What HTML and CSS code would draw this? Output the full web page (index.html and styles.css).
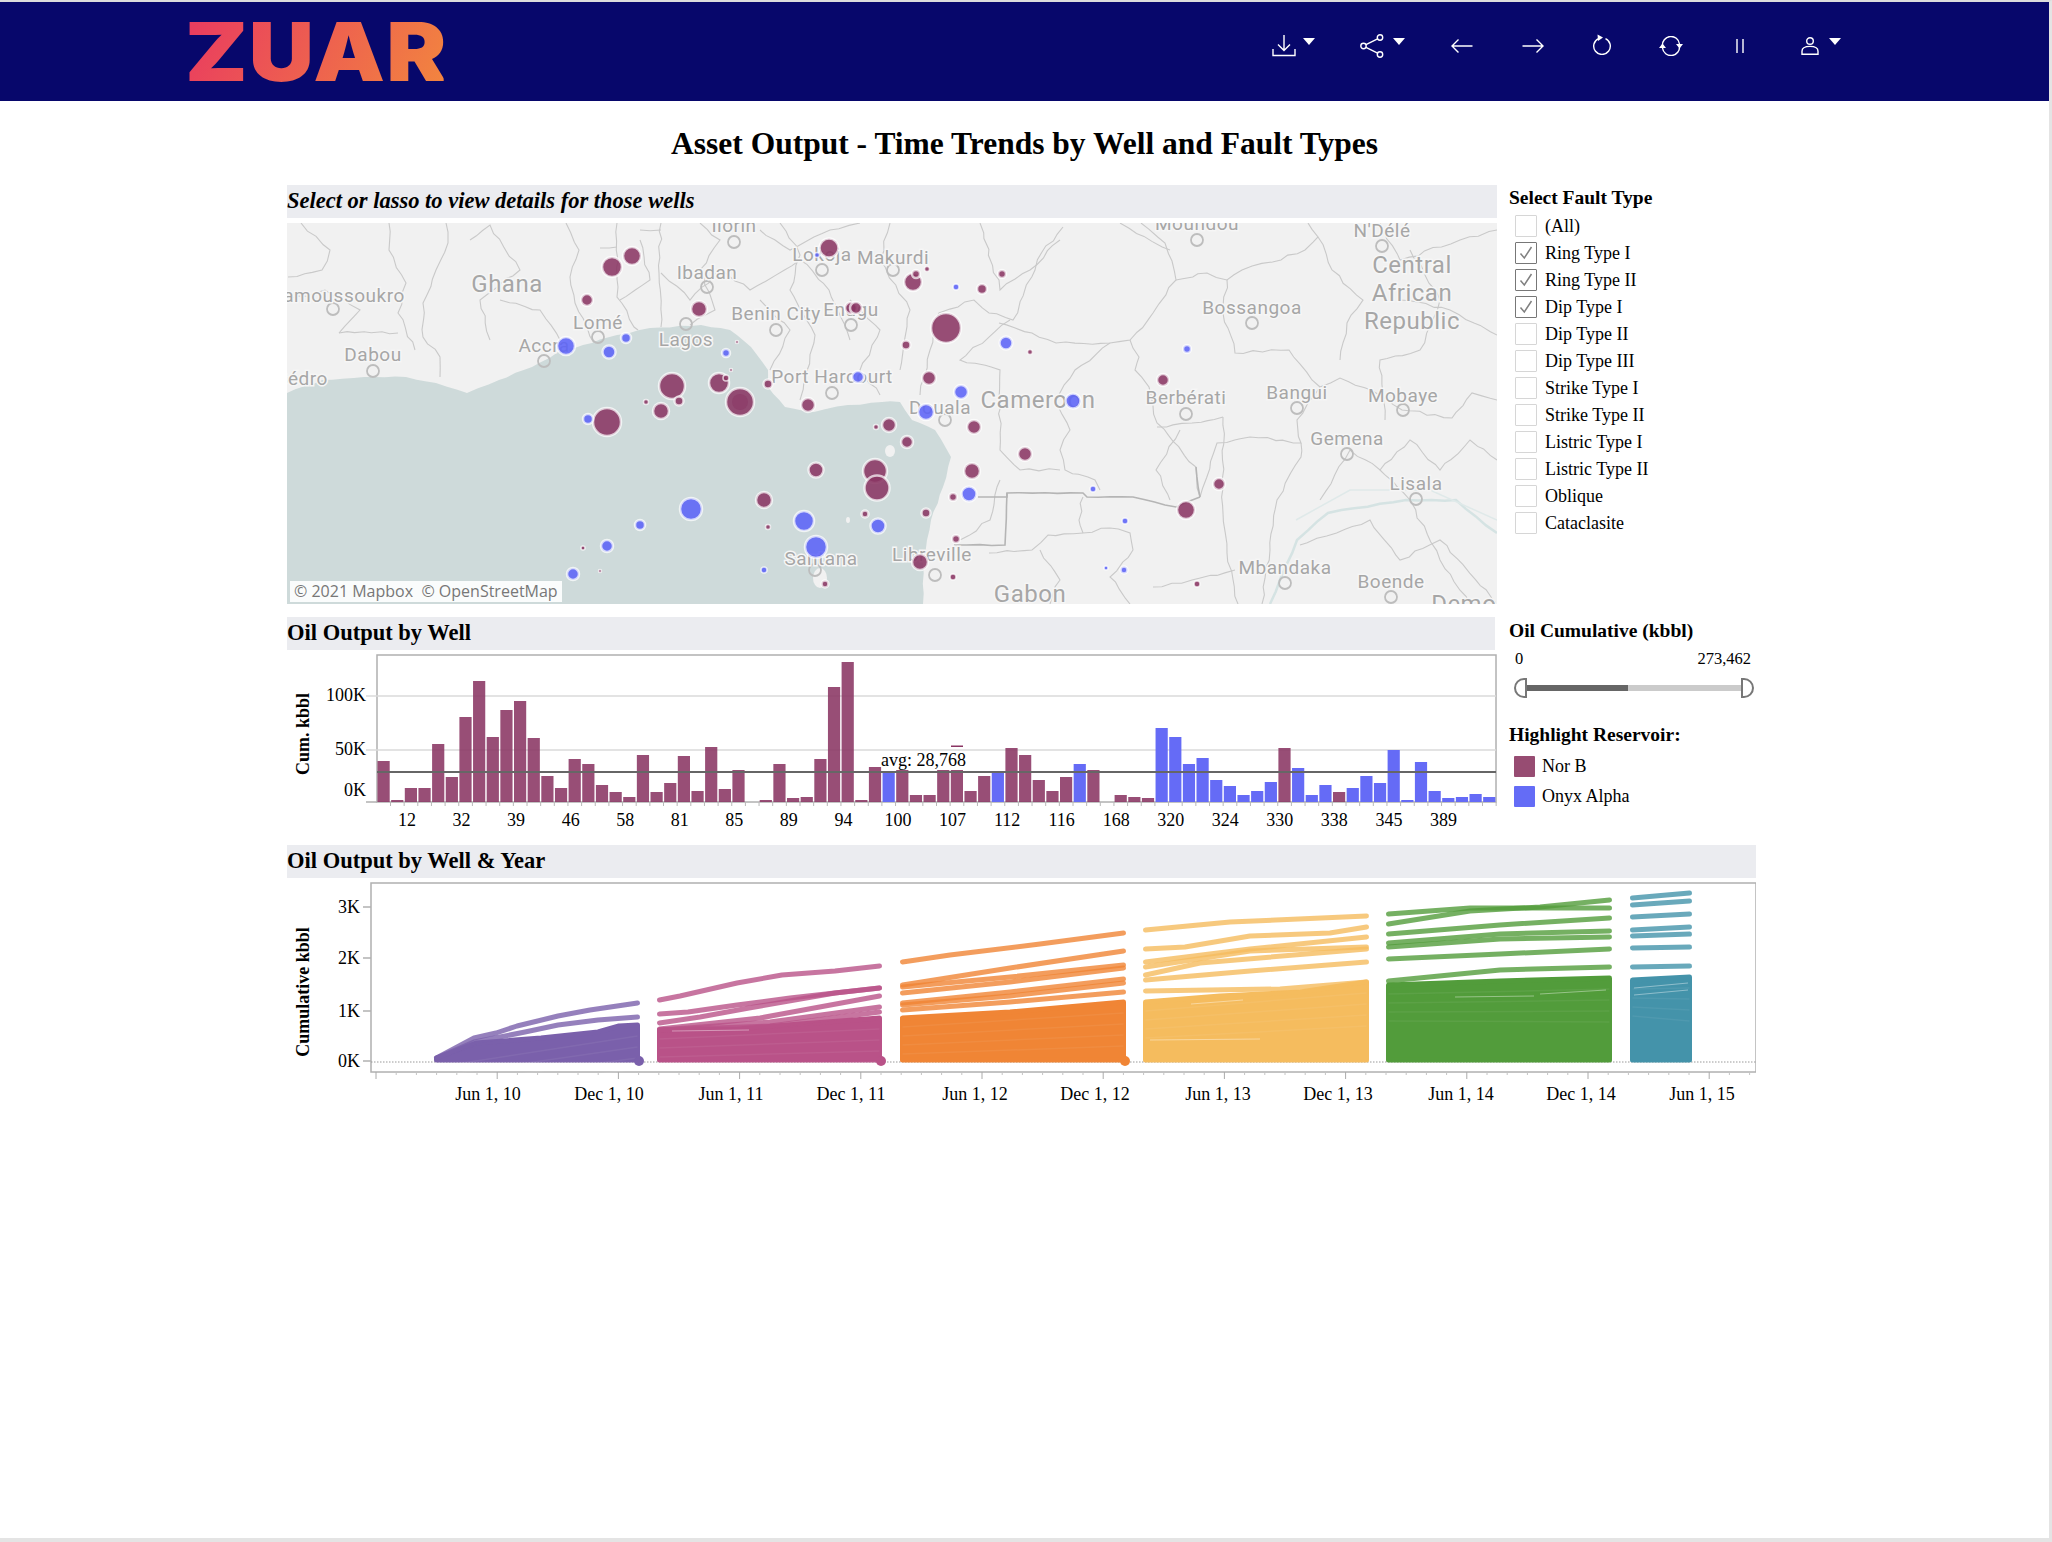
FILE: index.html
```html
<!DOCTYPE html>
<html lang="en">
<head>
    <meta charset="UTF-8">
    <meta name="viewport" content="width=device-width, initial-scale=1.0">
    <title>Asset Output - Time Trends by Well and Fault Types</title>
    <link rel="stylesheet" href="styles.css">
</head>
<body>

    <header class="topbar">
        <div class="logo">ZUAR</div>
        <nav class="tools">
            <span class="tool tool-download">
                <svg width="24" height="22" viewBox="0 0 24 22"><path d="M12 0V15M6 9.5L12 15.5L18 9.5M1 14V20.5H23V14"/></svg>
                <i class="caret"></i>
            </span>
            <span class="tool tool-share">
                <svg width="26" height="24" viewBox="0 0 26 24"><circle cx="3.5" cy="12" r="2.7"/><circle cx="20" cy="3.5" r="2.7"/><circle cx="20" cy="20.5" r="2.7"/><path d="M6 10.7L17.6 4.8M6 13.3L17.6 19.2"/></svg>
                <i class="caret"></i>
            </span>
            <span class="tool tool-back">
                <svg width="22" height="14" viewBox="0 0 22 14"><path d="M21.5 7H1M7.5 .5L1 7L7.5 13.5"/></svg>
            </span>
            <span class="tool tool-forward">
                <svg width="22" height="14" viewBox="0 0 22 14"><path d="M.5 7H21M14.5 .5L21 7L14.5 13.5"/></svg>
            </span>
            <span class="tool tool-undo">
                <svg width="20" height="21" viewBox="0 0 20 21"><path d="M13.5 4.6A8.3 8.3 0 1 1 6.5 4.6"/><path class="solid" d="M5.5 .5L11 3.4L6 7Z"/></svg>
            </span>
            <span class="tool tool-refresh">
                <svg width="24" height="20" viewBox="0 0 24 20"><path d="M3.5 10A8.5 8.5 0 0 1 20.5 8M20.5 10A8.5 8.5 0 0 1 3.5 12"/><path class="solid" d="M17 8H24L20.5 12.5ZM0 12H7L3.5 7.5Z"/></svg>
            </span>
            <span class="tool tool-pause">
                <svg width="10" height="14" viewBox="0 0 10 14"><path d="M2 0V14M8 0V14"/></svg>
            </span>
            <span class="tool tool-user">
                <svg width="18" height="18" viewBox="0 0 18 18"><circle cx="9" cy="4" r="3.3"/><path d="M1 17.2V14.2C1 11 4.5 9.4 9 9.4S17 11 17 14.2V17.2Z"/></svg>
                <i class="caret"></i>
            </span>
        </nav>
    </header>

    <h1 class="page-title">Asset Output - Time Trends by Well and Fault Types</h1>

    <main class="dashboard">

        <section class="panel panel-map">
            <h2 class="band band-italic">Select or lasso to view details for those wells</h2>
            <div class="map">
                <svg id="mapSvg" class="map-svg" width="1210" height="381" viewBox="287 223 1210 381"></svg>
                <div class="attribution">&copy; 2021 Mapbox &nbsp;&copy; OpenStreetMap</div>
            </div>
        </section>

        <aside class="side side-filter">
            <h3 class="side-title">Select Fault Type</h3>
            <ul class="checks">
                <li><span class="box"></span>(All)</li>
                <li><span class="box on"><svg width="16" height="16" viewBox="0 0 16 16"><path d="M2.5 8.5L6.3 13L13.5 2"/></svg></span>Ring Type I</li>
                <li><span class="box on"><svg width="16" height="16" viewBox="0 0 16 16"><path d="M2.5 8.5L6.3 13L13.5 2"/></svg></span>Ring Type II</li>
                <li><span class="box on"><svg width="16" height="16" viewBox="0 0 16 16"><path d="M2.5 8.5L6.3 13L13.5 2"/></svg></span>Dip Type I</li>
                <li><span class="box"></span>Dip Type II</li>
                <li><span class="box"></span>Dip Type III</li>
                <li><span class="box"></span>Strike Type I</li>
                <li><span class="box"></span>Strike Type II</li>
                <li><span class="box"></span>Listric Type I</li>
                <li><span class="box"></span>Listric Type II</li>
                <li><span class="box"></span>Oblique</li>
                <li><span class="box"></span>Cataclasite</li>
            </ul>
        </aside>

        <section class="panel panel-bars">
            <h2 class="band">Oil Output by Well</h2>
            <svg id="barSvg" class="chart" width="1210" height="187" viewBox="287 650 1210 187"></svg>
        </section>

        <aside class="side side-slider">
            <h3 class="side-title">Oil Cumulative (kbbl)</h3>
            <div class="range-values"><span>0</span><span>273,462</span></div>
            <div class="range">
                <span class="handle handle-left"></span>
                <span class="track"><span class="track-fill"></span></span>
                <span class="handle handle-right"></span>
            </div>
            <h3 class="side-title legend-title">Highlight Reservoir:</h3>
            <ul class="legend">
                <li><span class="swatch swatch-nor"></span>Nor B</li>
                <li><span class="swatch swatch-onyx"></span>Onyx Alpha</li>
            </ul>
        </aside>

        <section class="panel panel-lines">
            <h2 class="band">Oil Output by Well &amp; Year</h2>
            <svg id="lineSvg" class="chart" width="1469" height="240" viewBox="287 878 1469 240"></svg>
        </section>

    </main>

    <script src="charts.js"></script>
</body>
</html>
```

FILE: styles.css
```css
body {
    margin: 0;
    height: 1542px;
    box-sizing: border-box;
    overflow: hidden;
    background-color: white;
    color: black;
    font-family: "Liberation Serif", serif;
    border-top: 2px solid #dcdcdc;
    border-right: 3px solid #e4e4e4;
    border-bottom: 4px solid #e4e4e4;
}

/* top bar */
.topbar {
    display: flex;
    align-items: center;
    height: 99px;
    padding-left: 185px;
    background-color: #07076b;
}

.logo {
    width: 232px;
    font-family: Inter, "Liberation Sans", sans-serif;
    font-size: 81px;
    font-weight: 900;
    line-height: 72px;
    letter-spacing: 1px;
    background: linear-gradient(115deg, #e93a60, #f2853f);
    -webkit-background-clip: text;
    background-clip: text;
    color: transparent;
    transform: scaleX(1.115);
    transform-origin: left center;
}

.tools {
    display: flex;
    align-items: flex-start;
    align-self: flex-start;
    margin-left: 855px;
    margin-top: 33px;
}

.tool {
    display: flex;
    align-items: flex-start;
}

.tool svg {
    fill: none;
    stroke: white;
    stroke-width: 1.4;
}

.tool .solid {
    fill: white;
    stroke: none;
}

.caret {
    width: 0;
    height: 0;
    margin-left: 7px;
    margin-top: 3px;
    border-left: 6.5px solid transparent;
    border-right: 6.5px solid transparent;
    border-top: 7px solid white;
}

.tool-share { margin-left: 45px; margin-top: -1px; }
.tool-share .caret { margin-top: 4px; }
.tool-back { margin-left: 46px; margin-top: 4px; }
.tool-forward { margin-left: 49px; margin-top: 4px; }
.tool-undo { margin-left: 48px; margin-top: -1px; }
.tool-refresh { margin-left: 47px; margin-top: 1px; }
.tool-pause { margin-left: 52px; margin-top: 4px; }
.tool-user { margin-left: 56px; margin-top: 2px; }
.tool-user .caret { margin-left: 10px; margin-top: 1px; }

/* title */
.page-title {
    margin: 25px 0 0 0;
    font-size: 31.5px;
    line-height: 36px;
    font-weight: bold;
    text-align: center;
}

/* dashboard grid */
.dashboard {
    display: grid;
    grid-template-columns: 1210px 260px;
    grid-template-rows: 432px 228px auto;
    column-gap: 12px;
    margin: 23px 0 0 287px;
}

.band {
    margin: 0;
    height: 33px;
    padding: 0;
    background-color: #ebecf0;
    font-size: 22.5px;
    line-height: 32px;
    font-weight: bold;
}

.band-italic {
    font-style: italic;
}

.panel-lines {
    grid-column: 1 / span 2;
    width: 1469px;
}

.panel-bars .band {
    width: 1208px;
}

.map {
    position: relative;
    margin-top: 5px;
    height: 381px;
    overflow: hidden;
}

.map-svg, .chart {
    display: block;
}

.map-svg text {
    fill: #a6a6a6;
    stroke: #f6f6f6;
    stroke-width: 3px;
    paint-order: stroke;
    font-family: Roboto, sans-serif;
    letter-spacing: 0.5px;
    text-anchor: middle;
    dominant-baseline: middle;
}

.attribution {
    position: absolute;
    left: 3px;
    bottom: 2px;
    height: 21px;
    padding: 0 4px;
    background-color: rgba(255, 255, 255, 0.9);
    font-family: "Open Sans", sans-serif;
    font-size: 16px;
    line-height: 21px;
    color: #777;
    white-space: nowrap;
}

.chart text {
    font-family: "Liberation Serif", serif;
    font-size: 18px;
    fill: black;
}

.chart .axis-title {
    font-weight: bold;
    font-size: 18px;
}

/* right column */
.side-title {
    margin: 0;
    font-size: 19.5px;
    line-height: 24px;
    font-weight: bold;
}

.side-filter {
    margin-top: 1px;
}

.checks {
    list-style: none;
    margin: 3px 0 0 6px;
    padding: 0;
}

.checks li {
    display: flex;
    align-items: center;
    gap: 8px;
    height: 27px;
    font-size: 18px;
}

.box {
    display: flex;
    align-items: center;
    justify-content: center;
    width: 20px;
    height: 20px;
    margin-top: -2px;
    border: 1px solid #d6d6d6;
    border-radius: 1px;
}

.box.on {
    border-color: #777;
}

.box svg {
    fill: none;
    stroke: #808080;
    stroke-width: 1.5;
}

.side-slider {
    padding-top: 2px;
}

.range-values {
    display: flex;
    justify-content: space-between;
    width: 236px;
    margin: 6px 0 0 6px;
    font-size: 16.5px;
    line-height: 20px;
}

.range {
    display: flex;
    align-items: center;
    width: 240px;
    margin: 9px 0 0 5px;
}

.handle {
    width: 13px;
    height: 20px;
    box-sizing: border-box;
    border: 2px solid #777;
    background-color: white;
}

.handle-left {
    border-radius: 10px 0 0 10px;
}

.handle-right {
    border-radius: 0 10px 10px 0;
}

.track {
    flex: 1;
    height: 6px;
    background-color: #cbcbcb;
}

.track-fill {
    display: block;
    width: 101px;
    height: 6px;
    background-color: #666;
}

.legend-title {
    margin-top: 25px;
}

.legend {
    list-style: none;
    margin: 4px 0 0 5px;
    padding: 0;
}

.legend li {
    display: flex;
    align-items: center;
    gap: 7px;
    height: 30px;
    font-size: 18px;
}

.swatch {
    width: 21px;
    height: 21px;
    border-radius: 1px;
}

.swatch-nor {
    background-color: #974c72;
}

.swatch-onyx {
    background-color: #646cf6;
}
```

FILE: charts.js
```js
// draws the map, bar chart and line chart into the three svgs
const MAROON = '#8a3563';
const BLUE = '#5c63f7';
const BAR_BLUE = '#656bf6';

function pts(list) {
    return list.map(p => p.join(',')).join(' ');
}

function line(list, attrs) {
    return `<polyline points="${pts(list)}" fill="none" ${attrs}/>`;
}

// small fixed noise so the borders don't look ruler straight
let seed = 7;
function noise() {
    seed = (seed * 16807) % 2147483647;
    return (seed % 1000) / 500 - 1;
}

function wiggle(list, step, amount) {
    const out = [list[0]];
    for (let i = 1; i < list.length; i++) {
        const a = list[i - 1];
        const b = list[i];
        const n = Math.max(1, Math.round(Math.hypot(b[0] - a[0], b[1] - a[1]) / step));
        for (let k = 1; k <= n; k++) {
            const t = k / n;
            const off = k === n ? 0 : amount;
            out.push([
                +(a[0] + (b[0] - a[0]) * t + noise() * off).toFixed(1),
                +(a[1] + (b[1] - a[1]) * t + noise() * off).toFixed(1)
            ]);
        }
    }
    return out;
}

/* ---------- map ---------- */
const sea = [[287,393],[322,380],[364,377],[406,377],[436,383],[467,393],[499,380],[532,367],[558,352],[583,345],[617,335],[650,328],[701,325],[730,330],[751,347],[768,370],[768,387],[785,407],[814,412],[848,405],[882,402],[900,402],[912,420],[935,430],[951,457],[943,487],[931,520],[927,540],[923,563],[923,604],[287,604]];

const borders = [
    [[446,223],[448,243],[436,270],[423,303],[423,337],[440,357],[440,377]],
    [[566,223],[579,250],[570,277],[575,303],[587,327],[594,343]],
    [[617,223],[617,297],[634,327],[638,330]],
    [[661,223],[659,273],[661,327]],
    [[617,247],[600,248]], [[640,230],[661,230]],
    [[301,223],[330,250],[322,270],[288,277]],
    [[389,223],[389,250],[406,283],[398,313],[415,350]],
    [[339,333],[398,333]],
    [[288,300],[325,290],[360,310],[339,333]],
    [[470,240],[490,225],[520,270],[480,300],[490,340]],
    [[500,300],[540,310],[560,340]],
    [[661,273],[690,300],[720,270],[750,290],[800,260],[829,290],[850,340]],
    [[700,223],[720,240],[700,270]],
    [[760,230],[790,250],[830,230],[860,223]],
    [[760,300],[790,330],[770,370]],
    [[850,300],[880,330],[860,370],[880,395]],
    [[780,223],[800,255],[790,290],[815,335],[800,400]],
    [[700,270],[715,310],[690,325]],
    [[620,300],[650,280],[640,240]],
    [[890,223],[880,260],[910,310],[900,370]],
    [[1063,227],[1042,252],[1013,320],[989,313],[974,300],[958,307],[939,313],[930,350],[920,395]],
    [[999,323],[1032,333],[1056,343],[1110,343],[1130,340],[1153,313],[1176,280],[1165,243],[1141,223]],
    [[1130,340],[1139,357],[1135,370],[1149,387],[1157,423],[1196,467],[1200,497]],
    [[1176,280],[1207,273],[1227,280],[1242,270],[1281,260],[1305,250],[1318,237],[1308,223]],
    [[1318,237],[1332,270],[1363,300],[1347,323],[1340,360]],
    [[1227,280],[1223,313],[1235,353],[1289,350],[1312,380],[1320,387]],
    [[1157,427],[1192,423],[1223,417]],
    [[1200,497],[1217,443],[1250,437],[1301,443],[1297,420],[1320,387],[1340,378],[1371,390],[1402,410],[1452,418],[1472,393],[1497,400]],
    [[1301,443],[1301,457],[1277,500],[1270,550],[1262,604]],
    [[1223,417],[1223,513],[1227,553],[1238,604]],
    [[1235,570],[1192,580],[1153,587]],
    [[1110,343],[1075,370],[1056,400],[1070,430],[1060,450],[1065,470],[1095,480],[1100,490]],
    [[1083,497],[1079,520],[1083,533]],
    [[1083,533],[1110,528],[1130,533],[1133,550],[1110,577],[1130,604]],
    [[1083,533],[1048,535],[1032,550],[989,553]],
    [[980,223],[1000,290],[1030,270],[1060,240]],
    [[1010,320],[960,360],[1000,370],[1000,450],[1020,470],[1060,470]],
    [[1180,430],[1156,470],[1170,500]],
    [[1380,223],[1400,260],[1460,240],[1497,230]],
    [[1410,250],[1440,300],[1420,350],[1380,360],[1385,420]],
    [[1400,300],[1450,310],[1497,335]],
    [[1320,500],[1350,450],[1380,470],[1410,440],[1440,470],[1470,440],[1497,460]],
    [[1380,470],[1410,500],[1440,560],[1470,604]],
    [[1300,545],[1370,520],[1400,560],[1440,540],[1497,604]],
    [[960,540],[990,520],[1000,480]],
    [[1120,223],[1170,250]],
    [[1040,550],[1060,580],[1050,604]]
];
const heavy = [
    [[978,497],[1007,497],[1007,493],[1083,493],[1087,497],[1133,497],[1165,505],[1176,507],[1200,497]],
    [[1007,493],[1005,545],[954,545]],
    [[1196,467],[1200,497]]
];
const river = [[1270,604],[1297,540],[1328,513],[1406,500],[1456,500],[1497,533]];

const cities = [[734,242],[1197,240],[1382,246],[707,287],[893,270],[822,270],[776,330],[851,325],[1252,323],[598,337],[686,324],[544,361],[373,371],[333,309],[832,393],[945,420],[1186,414],[1297,408],[1403,410],[1347,454],[1416,499],[1285,583],[1391,597],[815,570],[935,575]];

const labels = [
    ['Ilorin',734,227,19],['Moundou',1197,225,19],["N'Délé",1382,232,19],
    ['Central',1412,267,24],['African',1412,295,24],['Republic',1412,323,24],
    ['Ghana',507,286,24],['amoussoukro',344,297,19],['Ibadan',707,274,19],
    ['Makurdi',893,259,19],['Lokoja',822,256,19],['Benin City',776,315,19],
    ['Enugu',851,311,19],['Bossangoa',1252,309,19],['Lomé',598,324,19],
    ['Lagos',686,341,19],['Accra',544,347,19],['Dabou',373,356,19],
    ['Sédro',302,380,19],['Port Harcourt',832,378,19],['Douala',940,409,19],
    ['Cameroon',1038,402,24],['Berbérati',1186,399,19],['Bangui',1297,394,19],
    ['Mobaye',1403,397,19],['Gemena',1347,440,19],['Lisala',1416,485,19],
    ['Santana',821,560,19],['Libreville',932,556,19],['Mbandaka',1285,569,19],
    ['Boende',1391,583,19],['Gabon',1030,596,24],['Democratic',1495,606,24]
];

const maroonDots = [[632,256,9],[612,267,10],[587,300,6],[699,309,8],[829,248,9.5],[913,282,9],[916,274,4],[927,269,2.5],[851,308,6],[856,308,6],[906,345,4.5],[929,378,7],[768,384,4.5],[808,405,7],[889,425,7],[876,427,2.5],[907,442,6],[672,386,13],[679,401,4.5],[661,411,8],[646,402,2.5],[719,383,10],[726,378,3],[731,370,1.5],[737,342,1.5],[740,402,14],[607,422,14],[816,470,7.5],[875,471,12],[877,488,12.5],[764,500,8],[865,514,3.5],[926,513,4.5],[768,527,2.5],[583,548,2],[600,571,1.5],[825,584,3.5],[920,562,8],[946,328,15],[982,289,5],[1002,274,4],[1030,352,2.5],[974,427,7],[1025,454,7],[972,471,8],[953,497,4],[956,539,4],[953,577,3],[1163,380,6],[1186,510,9],[1219,484,6],[1197,584,3]];
const blueDots = [[566,346,9],[609,352,6.5],[626,338,5],[726,353,4],[588,419,5],[858,377,6],[926,412,8],[817,255,2.5],[691,509,11],[640,525,5],[804,521,10],[878,526,7.5],[816,547,11],[607,546,6],[573,574,6],[764,570,3],[1006,343,6.5],[956,287,3],[961,392,7],[1073,401,7.5],[969,494,7.5],[1187,349,4],[1093,489,3],[1125,521,3],[1124,570,3.5],[1106,568,2]];

function dot(d, color) {
    return `<circle cx="${d[0]}" cy="${d[1]}" r="${d[2]}" fill="${color}" fill-opacity="0.88" stroke="#fff" stroke-opacity="0.7" stroke-width="${d[2] > 3 ? 2.5 : 1.5}"/>`;
}

let map = '<rect x="287" y="223" width="1210" height="381" fill="#f1f1f1"/>';
map += line(wiggle(river, 14, 1), 'stroke="#d5e3e3" stroke-width="2.5"');
map += line([[1296,520],[1350,490],[1430,490],[1497,520]], 'stroke="#dfe9e9" stroke-width="1.5"');
borders.forEach(b => { map += line(wiggle(b, 9, 1.6), 'stroke="#c9c9c9" stroke-width="1.1"'); });
heavy.forEach(b => { map += line(wiggle(b, 12, 0.5), 'stroke="#b5b5b5" stroke-width="1.6"'); });
map += `<polygon points="${pts(wiggle(sea.slice(0, 30), 10, 0.8).concat([[923,604],[287,604]]))}" fill="#cedada"/>`;
map += '<ellipse cx="890" cy="451" rx="5" ry="6" fill="#f1f1f1"/><ellipse cx="848" cy="520" rx="2" ry="3" fill="#f1f1f1"/><ellipse cx="820" cy="578" rx="7" ry="10" fill="#f1f1f1"/>';
cities.forEach(c => { map += `<circle cx="${c[0]}" cy="${c[1]}" r="6" fill="none" stroke="#bdbdbd" stroke-width="1.8"/>`; });
labels.forEach(l => { map += `<text x="${l[1]}" y="${l[2]}" font-size="${l[3]}">${l[0]}</text>`; });
maroonDots.forEach(d => { map += dot(d, MAROON); });
map += `<circle cx="740" cy="402" r="8" fill="${MAROON}" fill-opacity="0.5"/>`;
blueDots.forEach(d => { map += dot(d, BLUE); });
document.getElementById('mapSvg').innerHTML = map;

/* ---------- bars ---------- */
const barHeights = [41,2,14,14,58,25,85,121,65,92,101,64,26,14,43,38,17,10,5,47,10,19,46,11,55,13,32,0,2,38,4,5,43,115,140,2,35,30,32,7,7,32,32,11,26,30,54,47,22,11,25,38,32,0,7,5,4,74,65,38,44,22,16,7,11,20,54,34,7,17,10,14,26,19,52,2,40,11,4,5,8,5];
const blueBars = [37,45,51,57,58,59,60,61,62,63,64,65,67,68,69,71,72,73,74,75,76,77,78,79,80,81];
const wellTicks = ['12','32','39','46','58','81','85','89','94','100','107','112','116','168','320','324','330','338','345','389'];

let bars = '';
bars += '<rect x="377" y="655" width="1119" height="147" fill="none" stroke="#b0b0b0" stroke-width="1.5"/>';
[696, 750].forEach(y => { bars += `<line x1="366" x2="1496" y1="${y}" y2="${y}" stroke="#dadada" stroke-width="1.5"/>`; });
bars += '<line x1="366" x2="377" y1="802" y2="802" stroke="#b0b0b0" stroke-width="1.5"/>';
barHeights.forEach((h, i) => {
    const x = 377.5 + i * 13.65;
    const isBlue = blueBars.includes(i);
    bars += `<line x1="${x + 13}" x2="${x + 13}" y1="802" y2="806" stroke="#b8b8b8"/>`;
    if (h) bars += `<rect x="${x}" y="${802 - h}" width="12.2" height="${h}" fill="${isBlue ? BAR_BLUE : MAROON}" fill-opacity="${isBlue ? 1 : 0.88}"/>`;
});
bars += '<rect x="882" y="751" width="84" height="19" fill="#fff" fill-opacity="0.9"/>';
bars += `<rect x="951" y="745.5" width="12" height="1.5" fill="${MAROON}"/>`;
bars += '<line x1="377" x2="1496" y1="772" y2="772" stroke="#666" stroke-width="2"/>';
bars += '<text x="881" y="766">avg: 28,768</text>';
[['100K',695],['50K',749],['0K',790]].forEach(t => {
    bars += `<text x="366" y="${t[1] + 6}" text-anchor="end">${t[0]}</text>`;
});
wellTicks.forEach((t, i) => {
    bars += `<text x="${407 + i * 54.55}" y="826" text-anchor="middle">${t}</text>`;
});
bars += '<text class="axis-title" transform="translate(309 734) rotate(-90)" text-anchor="middle">Cum. kbbl</text>';
document.getElementById('barSvg').innerHTML = bars;

/* ---------- lines ---------- */
const years = [
    { color: '#7a60ab', x1: 434, x2: 640,
      fill: [[435,1058],[476,1043],[541,1038],[598,1032],[619,1026],[640,1025]],
      lines: [
        [[435,1058],[474,1038],[496,1033],[517,1026],[558,1016],[590,1010],[639,1003]],
        [[435,1058],[474,1042],[525,1032],[558,1025],[598,1020],[639,1017]]
      ], dot: true },
    { color: '#b95288', x1: 657, x2: 882,
      fill: [[657,1030],[737,1029],[800,1024],[882,1018]],
      lines: [
        [[657,1000],[680,996],[737,983],[782,975],[835,971],[882,966]],
        [[657,1014],[688,1012],[737,1005],[790,998],[882,988]],
        [[657,1023],[700,1017],[749,1008],[835,993],[882,988]],
        [[657,1029],[760,1018],[882,996]],
        [[657,1030],[770,1022],[882,1007]],
        [[657,1030],[770,1026],[882,1012]]
      ],
      slivers: [[[672,1031],[749,1030]]], dot: true },
    { color: '#f08535', x1: 900, x2: 1126,
      fill: [[900,1018],[1010,1012],[1126,1002]],
      lines: [
        [[900,962],[950,955],[1040,944],[1126,933]],
        [[900,985],[1010,968],[1126,951]],
        [[900,987],[1010,977],[1126,965]],
        [[900,993],[1010,982],[1126,968]],
        [[900,1003],[1010,992],[1126,979]],
        [[900,1005],[1010,996],[1126,983]],
        [[900,1010],[1010,1002],[1126,992]]
      ], dot: true },
    { color: '#f5bc5e', x1: 1143, x2: 1369,
      fill: [[1143,1002],[1220,996],[1300,992],[1369,982]],
      lines: [
        [[1143,930],[1230,922],[1369,916]],
        [[1143,949],[1185,947],[1250,936],[1330,933],[1369,927]],
        [[1143,962],[1250,949],[1369,937]],
        [[1143,967],[1250,951],[1369,947]],
        [[1143,975],[1200,963],[1369,949]],
        [[1143,980],[1250,971],[1369,962]],
        [[1143,991],[1280,989],[1369,982]]
      ],
      slivers: [[[1191,1004],[1243,1000]], [[1150,1040],[1260,1039]]] },
    { color: '#529c3b', x1: 1386, x2: 1612,
      fill: [[1386,985],[1500,981],[1612,978]],
      lines: [
        [[1386,914],[1470,908],[1540,908],[1612,908]],
        [[1386,924],[1470,911],[1540,907],[1612,900]],
        [[1386,934],[1500,925],[1612,918]],
        [[1386,943],[1500,934],[1612,931]],
        [[1386,947],[1500,939],[1612,937]],
        [[1386,959],[1500,954],[1612,949]],
        [[1386,981],[1500,970],[1612,967]],
        [[1386,998],[1540,995],[1612,993]]
      ],
      slivers: [[[1455,997],[1534,996]], [[1540,994],[1606,990]]] },
    { color: '#4493aa', x1: 1630, x2: 1692,
      fill: [[1630,980],[1692,977]],
      lines: [
        [[1630,898],[1692,893]],
        [[1630,905],[1692,901]],
        [[1630,917],[1692,914]],
        [[1630,930],[1692,927]],
        [[1630,936],[1692,934]],
        [[1630,948],[1692,947]],
        [[1630,967],[1692,966]]
      ],
      slivers: [[[1634,988],[1688,983]], [[1634,995],[1688,990]]] }
];

let chart = '';
chart += '<rect x="371" y="883" width="1385" height="189" fill="none" stroke="#b0b0b0" stroke-width="1.5"/>';
chart += '<line x1="371" x2="1756" y1="1062" y2="1062" stroke="#999" stroke-dasharray="1.5 1.5"/>';
[[907,'3K'],[958,'2K'],[1011,'1K'],[1061,'0K']].forEach(t => {
    chart += `<line x1="363" x2="371" y1="${t[0]}" y2="${t[0]}" stroke="#b0b0b0" stroke-width="1.5"/>`;
    chart += `<text x="360" y="${t[0] + 6}" text-anchor="end">${t[1]}</text>`;
});
for (let i = 0; i < 69; i++) {
    const x = 376 + i * 20.2;
    if (x > 1754) break;
    const major = i % 6 === 0;
    chart += `<line x1="${x}" x2="${x}" y1="1072" y2="${major ? 1079 : 1075}" stroke="${major ? '#aaa' : '#c4c4c4'}"/>`;
}
[['Jun 1, 10',488],['Dec 1, 10',609],['Jun 1, 11',731],['Dec 1, 11',851],['Jun 1, 12',975],['Dec 1, 12',1095],['Jun 1, 13',1218],['Dec 1, 13',1338],['Jun 1, 14',1461],['Dec 1, 14',1581],['Jun 1, 15',1702]].forEach(t => {
    chart += `<text x="${t[1]}" y="1100" text-anchor="middle">${t[0]}</text>`;
});
chart += '<text class="axis-title" transform="translate(309 992) rotate(-90)" text-anchor="middle">Cumulative kbbl</text>';

years.forEach(y => {
    const left = y.x1 + 2.5;
    const right = y.x2 - 2.5;
    const clamp = list => list.map(p => [Math.min(right, Math.max(left, p[0])), p[1]]);
    const poly = clamp(y.fill).concat([[right, 1060], [left, 1060]]);
    chart += `<polygon points="${pts(poly)}" fill="${y.color}" stroke="${y.color}" stroke-width="5" stroke-linejoin="round"/>`;
    y.lines.forEach(l => {
        chart += line(clamp(l), `stroke="${y.color}" stroke-opacity="0.8" stroke-width="5" stroke-linecap="round" stroke-linejoin="round"`);
    });
    // lighter seams inside the packed wells
    const a = y.fill[0][1];
    const b = y.fill[y.fill.length - 1][1];
    for (let i = 1; i < 5; i++) {
        chart += `<line x1="${left}" x2="${right}" y1="${a + i * 9}" y2="${b + i * 11}" stroke="#fff" stroke-opacity="0.06" stroke-width="1.5"/>`;
    }
    (y.slivers || []).forEach(s => {
        chart += line(s, 'stroke="#fff" stroke-opacity="0.4" stroke-width="1"');
    });
    if (y.dot) chart += `<circle cx="${y.x2 - 1}" cy="1061" r="5" fill="${y.color}"/>`;
});
document.getElementById('lineSvg').innerHTML = chart;
```
